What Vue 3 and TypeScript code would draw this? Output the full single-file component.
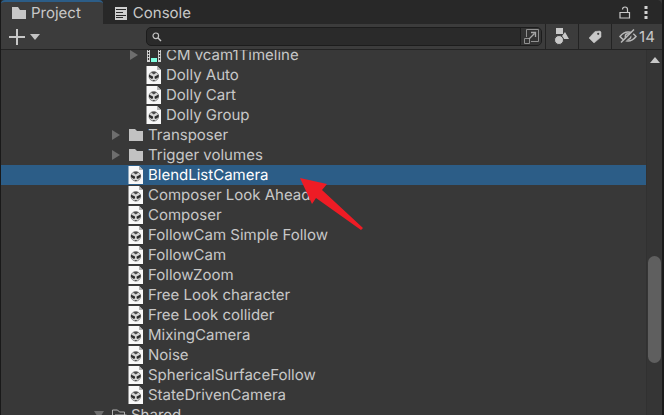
<script setup lang="ts">
import { ref } from 'vue'

type Kind = 'timeline' | 'asset' | 'folder' | 'open'
interface Item {
  name: string
  kind: Kind
  depth: number
}

const items: Item[] = [
  { name: 'CM vcam1Timeline', kind: 'timeline', depth: 2 },
  { name: 'Dolly Auto', kind: 'asset', depth: 2 },
  { name: 'Dolly Cart', kind: 'asset', depth: 2 },
  { name: 'Dolly Group', kind: 'asset', depth: 2 },
  { name: 'Transposer', kind: 'folder', depth: 1 },
  { name: 'Trigger volumes', kind: 'folder', depth: 1 },
  { name: 'BlendListCamera', kind: 'asset', depth: 1 },
  { name: 'Composer Look Ahead', kind: 'asset', depth: 1 },
  { name: 'Composer', kind: 'asset', depth: 1 },
  { name: 'FollowCam Simple Follow', kind: 'asset', depth: 1 },
  { name: 'FollowCam', kind: 'asset', depth: 1 },
  { name: 'FollowZoom', kind: 'asset', depth: 1 },
  { name: 'Free Look character', kind: 'asset', depth: 1 },
  { name: 'Free Look collider', kind: 'asset', depth: 1 },
  { name: 'MixingCamera', kind: 'asset', depth: 1 },
  { name: 'Noise', kind: 'asset', depth: 1 },
  { name: 'SphericalSurfaceFollow', kind: 'asset', depth: 1 },
  { name: 'StateDrivenCamera', kind: 'asset', depth: 1 },
  { name: 'Shared', kind: 'open', depth: 0 },
]

const selected = ref('BlendListCamera')
const query = ref('')
</script>

<template>
  <main class="panel">
    <header class="tabs">
      <button class="tab active" type="button">
        <svg width="14" height="12" viewBox="0 0 14 12"><path d="M0 0h6l2 3h6v9H0z" fill="#c8c8c8" /></svg>
        Project
      </button>
      <button class="tab" type="button">
        <svg width="12" height="13" viewBox="0 0 12 13">
          <path d="M0 0h12v13H0z" fill="#d0d0d0" />
          <path d="M1 2.5h10M1 5.500h7M1 8.500h10M1 10.500h7" stroke="#282828" />
        </svg>
        Console
      </button>
      <div class="tab-tools">
        <button type="button" aria-label="Lock">
          <svg width="12" height="13" viewBox="0 0 12 13" fill="none" stroke="#c8c8c8" stroke-width="1.2">
            <path d="M1 6.5h9.5v5.5H1zM3.5 3.500Q3.500 1 6 1T8.500 3.500V6.500" />
          </svg>
        </button>
        <button type="button" aria-label="Menu">
          <svg width="4" height="13" viewBox="0 0 4 13" fill="#d2d2d2">
            <path d="M.5 0h3v3h-3zM.5 5h3v3h-3zM.5 10h3v3h-3z" />
          </svg>
        </button>
      </div>
    </header>

    <div class="toolbar">
      <button class="add" type="button" aria-label="Create">
        <svg width="32" height="16" viewBox="0 0 32 16">
          <path d="M8 0v16M0 8h16" stroke="#c8c8c8" stroke-width="2" />
          <path d="M21 5h10l-5 6z" fill="#c4c4c4" />
        </svg>
      </button>
      <div class="search">
        <svg class="glass" width="10" height="10" viewBox="0 0 10 10" fill="none" stroke="#c4c4c4">
          <circle cx="3.800" cy="3.800" r="2.800" stroke-width="1.200" />
          <path d="M5.800 5.800 9 9" stroke-width="1.500" />
        </svg>
        <input v-model="query" type="text" aria-label="Search assets" />
        <button type="button" aria-label="Open search window">
          <svg width="15" height="15" viewBox="0 0 15 15" fill="none" stroke="#909090">
            <path d="M2.500 8V.5h12v12H7M.5 9.500h5v5h-5z" />
            <path d="M5 10 10.500 4.500M7 3.500h4.500V8" stroke="#a8a8a8" stroke-width="1.300" />
          </svg>
        </button>
      </div>
      <button class="tool" type="button" aria-label="Search by type">
        <svg width="16" height="17" viewBox="0 0 16 17" fill="#c8c8c8">
          <path d="M2 0h7v6H2zM11 4l4 7h-5L8 8z" />
          <circle cx="5" cy="12" r="4.500" stroke="#3c3c3c" stroke-width="1" />
        </svg>
      </button>
      <button class="tool" type="button" aria-label="Search by label">
        <svg width="14" height="14" viewBox="0 0 14 14">
          <path d="M7 1.500 12 1l1 1v5l-7 6-5-5z" fill="#c8c8c8" stroke="#c8c8c8" stroke-width=".5" stroke-linejoin="round" />
          <circle cx="10.200" cy="3.800" r="1.100" fill="#3c3c3c" />
        </svg>
      </button>
      <button class="tool hidden" type="button" aria-label="Hidden packages: 14">
        <svg width="18" height="15" viewBox="0 0 18 15" fill="none" stroke="#b8b8b8">
          <path d="M1 7.500Q4.500 3 9 3t8 4.500Q13.500 12 9 12T1 7.500z" stroke-width="1.500" />
          <circle cx="9" cy="7.500" r="2.700" stroke-width="1.500" />
          <path d="M3 14.500 16 1.500" stroke="#3c3c3c" stroke-width="2" />
          <path d="M2 13.500 15 .5" stroke-width="1.500" />
        </svg>
        14
      </button>
    </div>

    <div class="body">
      <ul class="tree" role="tree">
        <li
          v-for="item in items"
          :key="item.name"
          role="treeitem"
          :aria-selected="item.name === selected"
          :class="['row', 'depth-' + item.depth, { selected: item.name === selected }]"
          @click="selected = item.name"
        >
          <span class="fold">
            <svg v-if="item.kind === 'open'" width="10" height="10" viewBox="0 0 10 10"><path d="M0 1h10L5 9z" fill="#6e6e6e" /></svg>
            <svg v-else-if="item.kind !== 'asset'" width="10" height="10" viewBox="0 0 10 10"><path d="M1 0v10l8-5z" fill="#6e6e6e" /></svg>
          </span>
          <svg v-if="item.kind === 'asset'" class="icon" width="16" height="18" viewBox="0 0 16 18">
            <path d="M.5 0H11l4 4v14H.5z" fill="#f8f8f8" />
            <path d="M11 0v4h4z" fill="#b4b4b4" />
            <circle cx="7.800" cy="10.300" r="4.800" fill="#d6d6d6" stroke="#8a8a8a" />
            <path d="M5 6.500q2.800-1.500 5.600 0L7.800 8.500z" fill="#4a4a4a" />
            <path d="M3 8.500 7 10.500v1.800L5.800 13 3 11zM12.600 8.500l-4 2v1.800l1.200.7 2.800-2z" fill="#2c2c2c" />
            <path d="M6.300 14h3l-1.500 1.300z" fill="#444" />
          </svg>
          <svg v-else-if="item.kind === 'timeline'" class="icon" width="16" height="16" viewBox="0 0 16 16">
            <path d="M1 1h14v14H1z" fill="#303030" />
            <path d="M5 1h6v2H5zM5 11h6v4H5z" fill="#7fffe0" />
            <path d="M2.500 1v14M13.500 1v14" stroke="#d4d4d4" stroke-width="3" />
            <path d="M2.500 2v12M13.500 2v12" stroke="#303030" stroke-width="1.200" stroke-dasharray="2 1" />
          </svg>
          <svg v-else-if="item.kind === 'folder'" class="icon" width="16" height="16" viewBox="0 0 16 16">
            <path d="M1 2h6l2 2h6v10H1z" fill="#c2c2c2" />
          </svg>
          <svg v-else class="icon" width="16" height="16" viewBox="0 0 16 16" fill="none" stroke="#b0b0b0">
            <path d="M1.500 14V3h5l2 2h5v3M1.500 14l2.500-6h11.500l-2.500 6z" />
          </svg>
          <span class="name">{{ item.name }}</span>
        </li>
      </ul>
      <div class="scroll">
        <svg width="10" height="6" viewBox="0 0 10 6"><path d="M5 0l5 6H0z" fill="#c8c8c8" /></svg>
        <span class="before"></span>
        <span class="thumb"></span>
        <span class="after"></span>
      </div>
      <svg class="pointer" width="64" height="52" viewBox="0 0 64 52">
        <path d="M1 0 28 6 23 12 64 50 62 52 17 20 13 26z" fill="#ee1c25" />
      </svg>
    </div>
  </main>
</template>

<style>
body {
  margin: 0;
  background: #191919;
}
</style>

<style scoped>
.panel {
  box-sizing: border-box;
  height: 100vh;
  display: flex;
  flex-direction: column;
  border-left: 1px solid #191919;
  border-right: 2px solid #191919;
  background: #383838;
  color: #c8c8c8;
  font: 15px/20px Inter, "Liberation Sans", sans-serif;
  text-rendering: geometricPrecision;
  overflow: hidden;
}
button {
  display: flex;
  align-items: center;
  justify-content: center;
  margin: 0;
  padding: 0;
  border: 0;
  background: none;
  color: inherit;
  font: inherit;
  text-rendering: inherit;
}
svg {
  display: block;
  flex: none;
}
.tabs {
  display: flex;
  flex: 0 0 24px;
  background: #282828;
  border-radius: 0 5px 0 0;
}
.tab {
  box-sizing: border-box;
  gap: 6px;
  padding: 0 22px 0 12px;
  border-top: 2px solid transparent;
}
.tab.active {
  padding-left: 11px;
  gap: 5px;
  background: #3c3c3c;
  border-top-color: #2c5d87;
  border-radius: 4px 4px 0 0;
}
.tab-tools {
  display: flex;
  gap: 13px;
  margin-left: auto;
  padding-right: 14px;
}
.toolbar {
  box-sizing: border-box;
  display: flex;
  flex: 0 0 26px;
  background: #3c3c3c;
  border-bottom: 1px solid #232323;
}
.add {
  padding: 0 8px;
}
.search {
  box-sizing: border-box;
  flex: 1;
  display: flex;
  align-items: center;
  min-width: 0;
  margin: 3px 3px 3px 97px;
  padding-left: 5px;
  background: #2a2a2a;
  border: 1px solid #1c1c1c;
  border-radius: 5px;
}
.search input {
  flex: 1;
  min-width: 0;
  height: 16px;
  padding: 0 4px;
  border: 0;
  outline: 0;
  background: none;
  color: inherit;
  font: inherit;
}
.search button {
  align-self: stretch;
  width: 21px;
  background: #333;
  border-left: 1px solid #1c1c1c;
  border-radius: 0 4px 4px 0;
}
.tool {
  box-sizing: border-box;
  width: 33px;
  border-left: 1px solid #232323;
}
.tool.hidden {
  width: 51px;
  gap: 2px;
}
.body {
  flex: 1;
  display: flex;
  min-height: 0;
  position: relative;
}
.tree {
  flex: 1;
  min-width: 0;
  margin: 0;
  padding: 0;
  list-style: none;
  overflow: hidden;
}
.row {
  display: flex;
  align-items: center;
  height: 20px;
  white-space: nowrap;
}
.row:first-child {
  margin-top: -5px;
}
.depth-0 {
  padding-left: 93px;
}
.depth-1 {
  padding-left: 110px;
}
.depth-2 {
  padding-left: 128px;
}
.selected {
  background: #2c5d87;
  color: #fff;
}
.fold {
  width: 17px;
}
.icon {
  margin-right: 4px;
}
.scroll {
  box-sizing: border-box;
  flex: 0 0 16px;
  display: flex;
  flex-direction: column;
  align-items: center;
  padding-top: 7px;
  background: #353535;
  border-left: 1px solid #313131;
}
.before {
  flex: 193;
}
.thumb {
  flex: 107;
  width: 13px;
  border-radius: 7px;
  background: #5f5f5f;
}
.after {
  flex: 52;
}
.pointer {
  position: absolute;
  left: 298px;
  top: 128px;
}
</style>
